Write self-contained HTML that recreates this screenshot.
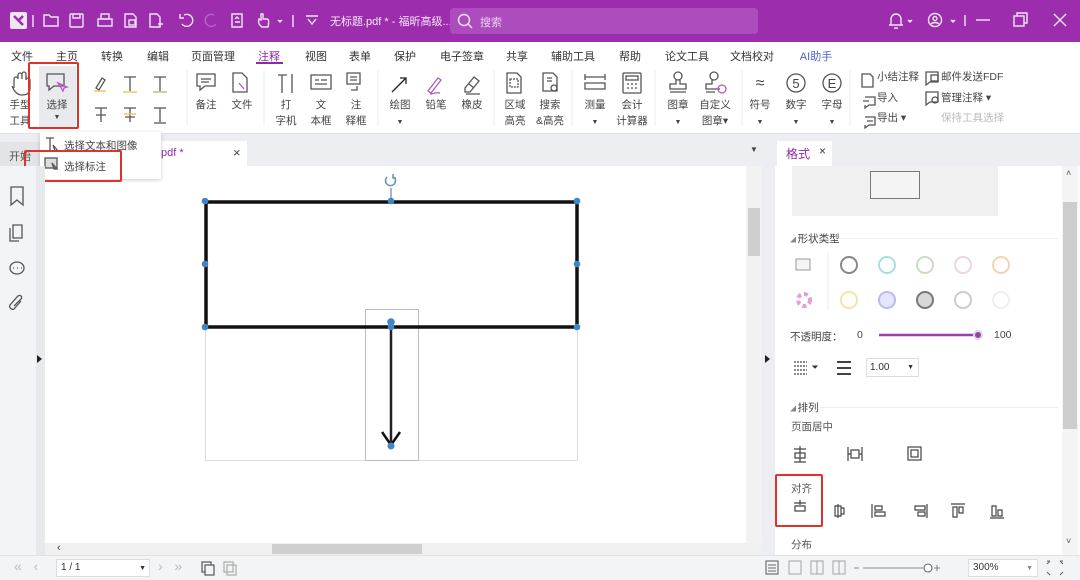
<!DOCTYPE html>
<html><head><meta charset="utf-8"><style>
*{margin:0;padding:0;box-sizing:border-box}
body{width:1080px;height:580px;overflow:hidden;position:relative;background:#fff;font-family:"Liberation Sans","Noto Sans CJK SC",sans-serif;font-size:11px;color:#333}
.a{position:absolute}
.c{position:absolute;transform:translateX(-50%);white-space:nowrap;text-align:center}
.lbl{font-size:10.5px;color:#444;line-height:16px}
svg{position:absolute;overflow:visible}
.ic{fill:none;stroke:#555;stroke-width:1.3}
.dot{fill:#3d86c9}
</style></head><body>
<!-- title bar -->
<div class="a" style="left:0;top:0;width:1080px;height:42px;background:#9c2eae"></div>
<div class="a" style="left:10px;top:12px;width:17px;height:17px;background:#f2e6f5;border-radius:2px"></div>
<svg style="left:10px;top:12px" width="17" height="17"><path d="M4 4L13 13M13 4L8 9" stroke="#9c2eae" stroke-width="2.5"/></svg>
<svg style="left:0;top:0" width="450" height="42" class="w">
<g fill="none" stroke="#f3e4f6" stroke-width="1.4">
<line x1="33" y1="15" x2="33" y2="27"/>
<path d="M44 15h5l2 2h7v9h-14z"/>
<rect x="70" y="14" width="13" height="13" rx="1"/><path d="M73 14v4h7v-4"/>
<rect x="98" y="19" width="14" height="7"/><rect x="101" y="14" width="8" height="5"/>
<path d="M125 14h8l3 3v10h-11z"/><rect x="129" y="20" width="6" height="5"/>
<path d="M150 14h7l3 3v10h-10z"/><path d="M160 22v5M158 24h5"/>
<path d="M184 15a6 6 0 1 1-2 9M180 14v4h4"/>
<path d="M214 15a6 6 0 1 0 2 9" stroke="#b866c6"/>
<path d="M232 14h10v13h-10z"/><path d="M235 19l2-2 2 2M235 22h5"/>
<path d="M262 27c-3-2-4-5-3-8l2 1v-6h2v5h4c2 0 2 4 1 8z"/><path d="M278 20l2 2 2-2" fill="#f3e4f6"/>
<line x1="293" y1="15" x2="293" y2="27"/>
<path d="M306 16h12M308 19l4 5 4-5"/>
</g>
<text x="330" y="25" fill="#f5e8f7" font-size="11">无标题.pdf * - 福昕高级...</text>
</svg>
<div class="a" style="left:450px;top:8px;width:308px;height:26px;background:#ad4cbd;border-radius:4px"></div>
<svg style="left:457px;top:13px" width="16" height="16"><circle cx="7" cy="7" r="5.5" fill="none" stroke="#f3e4f6" stroke-width="1.4"/><path d="M11 11l4 4" stroke="#f3e4f6" stroke-width="1.4"/></svg>
<div class="a" style="left:480px;top:14px;color:#e9d4ee;font-size:11px">搜索</div>
<svg style="left:880px;top:0" width="200" height="42"><g fill="none" stroke="#f3e4f6" stroke-width="1.4">
<path d="M11 25V19a5 5 0 0 1 10 0v6h2H9zM14 28h4"/><path d="M28 20l2 2 2-2" fill="#f3e4f6"/>
<circle cx="55" cy="20" r="6.5"/><circle cx="55" cy="18.5" r="2"/><path d="M51 24c2-2 6-2 8 0"/><path d="M71 20l2 2 2-2" fill="#f3e4f6"/>
<line x1="85" y1="15" x2="85" y2="26"/><line x1="96" y1="20" x2="110" y2="20"/>
<rect x="134" y="16" width="10" height="10"/><path d="M137 16v-3h10v10h-3"/>
<path d="M174 14l12 12M186 14l-12 12"/></g></svg>
<!-- menu -->
<div class="a" style="left:0;top:42px;width:1080px;height:92px;background:#fff;border-bottom:1px solid #e3e3e3"></div>
<div style="font-size:11px;color:#333">
<div class="c" style="left:22px;top:48px">文件</div><div class="c" style="left:67px;top:48px">主页</div><div class="c" style="left:112px;top:48px">转换</div><div class="c" style="left:158px;top:48px">编辑</div><div class="c" style="left:213px;top:48px">页面管理</div><div class="c" style="left:269px;top:48px;color:#8e2aa3">注释</div><div class="c" style="left:316px;top:48px">视图</div><div class="c" style="left:360px;top:48px">表单</div><div class="c" style="left:405px;top:48px">保护</div><div class="c" style="left:462px;top:48px">电子签章</div><div class="c" style="left:517px;top:48px">共享</div><div class="c" style="left:573px;top:48px">辅助工具</div><div class="c" style="left:630px;top:48px">帮助</div><div class="c" style="left:687px;top:48px">论文工具</div><div class="c" style="left:752px;top:48px">文档校对</div><div class="c" style="left:816px;top:48px;color:#4c5fc9">AI助手</div>
</div>
<div class="a" style="left:256px;top:62px;width:27px;height:2px;background:#8e2aa3"></div>
<!-- ribbon -->
<div class="a" style="left:39px;top:66px;width:37px;height:62px;background:#e9eaee"></div>
<svg style="left:0;top:66px" width="1080" height="66"><g class="ic">
<path d="M14 22v-9a2 2 0 0 1 4 0v-4a2 2 0 0 1 4 0v4M22 8a2 2 0 0 1 4 0v6a2 2 0 0 1 4 0v8c0 5-3 7-8 7s-8-4-10-9"/>
<path d="M47 8h17v12h-10l-5 4v-4h-2z"/><path d="M58 17l5 8 1-3 3-1z" stroke="#c04fd0"/>
<path d="M96 22l6-10 3 2-6 10z"/><line x1="94" y1="25" x2="106" y2="25" stroke="#e6c34a"/>
<path d="M124 11h12M130 11v14"/><line x1="123" y1="26" x2="137" y2="26" stroke="#e6c34a"/>
<path d="M154 11h12M160 11v14"/><line x1="153" y1="26" x2="167" y2="26" stroke="#9bbf6d"/>
<path d="M95 42h12M101 42v14M96 49h10"/><path d="M124 42h12M130 42v14M125 51h10"/><line x1="124" y1="48" x2="136" y2="48" stroke="#e6c34a"/>
<path d="M154 42h12M160 42v14"/><line x1="154" y1="57" x2="166" y2="57"/>
<path d="M197 8h18v12h-10l-5 4v-4h-3zM201 13h10M201 16h8"/>
<path d="M233 7h9l5 5v14h-14z"/><path d="M239 17l5 6" stroke="#c04fd0"/>
<path d="M278 9h9M282 9v18M292 8v19" /><path d="M311 9h20v14h-20zM315 14h4M321 14h6M315 18h12"/>
<path d="M347 7h13v11h-13zM350 11h7M350 14h7M357 20v4h-6"/>
<path d="M392 26l14-14M400 12h6v6" stroke="#222"/>
<path d="M428 25l10-13 3 2-10 13zM430 28c3 0 6-2 10-1" stroke="#b05ac0"/>
<path d="M465 22l9-11 5 4-9 11h-5zM469 18l5 4M466 28h14"/>
<path d="M507 7h10l4 4v16h-14z"/><rect x="510" y="13" width="8" height="8" stroke-dasharray="2 1"/>
<path d="M543 7h10l4 4v14h-14z M547 12h5M547 15h5"/><circle cx="554" cy="22" r="3"/>
<path d="M585 11h20M585 8v6M605 8v6M585 17h20v6h-20z"/>
<rect x="623" y="7" width="18" height="20" rx="1"/><rect x="626" y="10" width="12" height="4"/><path d="M627 18h2M631 18h2M635 18h2M627 22h2M631 22h2M635 22h2"/>
<circle cx="678" cy="10" r="4"/><path d="M676 14v4h-6v5h16v-5h-6v-4M670 26h16"/>
<circle cx="714" cy="10" r="4"/><path d="M712 14v4h-6v5h14M706 26h9"/><circle cx="722" cy="23" r="4" stroke="#b05ac0"/>
<circle cx="796" cy="17" r="9"/><circle cx="832" cy="17" r="9"/>
<path d="M862 8h8l3 3v10h-11z"/><path d="M865 31h10v8h-6l-4 3v-3M863 35h6"/><path d="M865 51h10v8h-6l-4 3v-3M867 55h6"/>
<path d="M926 6h12v10h-8l-4 3z"/><rect x="931" y="9" width="7" height="6"/>
<path d="M926 26h12v10h-8l-4 3z"/><circle cx="935" cy="34" r="3"/>
</g>
<g fill="#444" font-size="10.5" font-family="Liberation Sans,Noto Sans CJK SC,sans-serif">
<text x="760" y="22" text-anchor="middle" font-size="16">≈</text><text x="796" y="22" text-anchor="middle" font-size="13">5</text><text x="832" y="22" text-anchor="middle" font-size="13">E</text>
<text x="112" y="22" fill="none"></text>
</g>
<g fill="#ddd"><line x1="187" y1="4" x2="187" y2="60" stroke="#eee"/><line x1="264" y1="4" x2="264" y2="60" stroke="#eee"/><line x1="378" y1="4" x2="378" y2="60" stroke="#eee"/><line x1="494" y1="4" x2="494" y2="60" stroke="#eee"/><line x1="572" y1="4" x2="572" y2="60" stroke="#eee"/><line x1="655" y1="4" x2="655" y2="60" stroke="#eee"/><line x1="742" y1="4" x2="742" y2="60" stroke="#eee"/><line x1="850" y1="4" x2="850" y2="60" stroke="#eee"/></g>
</svg>
<div class="lbl">
<div class="c" style="left:20px;top:97px">手型<br>工具</div>
<div class="c" style="left:57px;top:97px">选择</div><div class="c" style="left:57px;top:110px;font-size:7px">▼</div>
<div class="c" style="left:206px;top:97px">备注</div><div class="c" style="left:242px;top:97px">文件</div>
<div class="c" style="left:286px;top:97px">打<br>字机</div><div class="c" style="left:321px;top:97px">文<br>本框</div><div class="c" style="left:356px;top:97px">注<br>释框</div>
<div class="c" style="left:400px;top:97px">绘图<br><span style="font-size:7px">▼</span></div><div class="c" style="left:436px;top:97px">铅笔</div><div class="c" style="left:472px;top:97px">橡皮</div>
<div class="c" style="left:515px;top:97px">区域<br>高亮</div><div class="c" style="left:550px;top:97px">搜索<br>&amp;高亮</div>
<div class="c" style="left:595px;top:97px">测量<br><span style="font-size:7px">▼</span></div><div class="c" style="left:632px;top:97px">会计<br>计算器</div>
<div class="c" style="left:678px;top:97px">图章<br><span style="font-size:7px">▼</span></div><div class="c" style="left:715px;top:97px">自定义<br>图章▾</div>
<div class="c" style="left:760px;top:97px">符号<br><span style="font-size:7px">▼</span></div><div class="c" style="left:796px;top:97px">数字<br><span style="font-size:7px">▼</span></div><div class="c" style="left:832px;top:97px">字母<br><span style="font-size:7px">▼</span></div>
<div class="a" style="left:877px;top:69px">小结注释</div><div class="a" style="left:941px;top:69px">邮件发送FDF</div>
<div class="a" style="left:877px;top:90px">导入</div><div class="a" style="left:941px;top:90px">管理注释 ▾</div>
<div class="a" style="left:877px;top:110px">导出 ▾</div><div class="a" style="left:941px;top:110px;color:#bbb">保持工具选择</div>
</div>
<div class="a" style="left:28px;top:62px;width:51px;height:67px;border:2px solid #e0312b;border-radius:2px"></div>
<!-- tab row -->
<div class="a" style="left:0;top:134px;width:1080px;height:32px;background:#eceef2"></div>
<div class="a" style="left:0;top:142px;width:45px;height:24px;background:#e2e4e8;padding:6px 0 0 9px;color:#555">开始</div>
<div class="a" style="left:150px;top:141px;width:97px;height:25px;background:#fff"></div>
<div class="a" style="left:158px;top:147px;color:#8e2aa3">.pdf *</div>
<div class="a" style="left:233px;top:145px;font-size:13px;color:#444">×</div>
<div class="a" style="left:750px;top:145px;font-size:8px;color:#444">▼</div>
<div class="a" style="left:777px;top:141px;width:55px;height:25px;background:#fff"></div>
<div class="a" style="left:786px;top:145px;color:#8e2aa3;font-size:12px">格式</div>
<div class="a" style="left:819px;top:144px;font-size:12px;color:#444">×</div>
<!-- dropdown -->
<div class="a" style="left:40px;top:132px;width:121px;height:47px;background:#fff;box-shadow:0 1px 4px rgba(0,0,0,.2)"></div>
<svg style="left:44px;top:136px" width="20" height="40"><g class="ic"><path d="M2 2h8M6 2v12"/><path d="M9 9l5 6-3 0z"/><rect x="1" y="22" width="12" height="10" fill="#ddd"/><path d="M8 27l5 6-3 0z"/></g></svg>
<div class="a" style="left:64px;top:138px;color:#444;font-size:10.5px">选择文本和图像</div>
<div class="a" style="left:64px;top:159px;color:#444;font-size:10.5px">选择标注</div>
<div class="a" style="left:24px;top:150px;width:98px;height:32px;border:2px solid #e0312b;border-radius:2px"></div>
<!-- left sidebar -->
<div class="a" style="left:0;top:166px;width:36px;height:389px;background:#f3f4f7"></div>
<div class="a" style="left:36px;top:166px;width:9px;height:389px;background:#e8e9ed"></div>
<svg style="left:0;top:166px" width="45" height="300"><g class="ic" stroke-width="1.4">
<path d="M11 21v18l6-5 6 5V21z"/><path d="M13 59h9v13h-9zM10 62v13h9"/>
<ellipse cx="17" cy="102" rx="7" ry="6"/><path d="M13 102h1M17 102h1M21 102h1"/>
<path d="M21 135l-7 8a3 3 0 0 1-4-4l8-9a2 2 0 0 1 3 3l-7 7"/></g>
<path d="M37 189l5 4-5 4z" fill="#222"/></svg>
<!-- document -->
<svg style="left:0;top:0" width="750" height="545">
<rect x="205.5" y="327.5" width="372" height="133" fill="none" stroke="#bbb" stroke-width="1" stroke-dasharray="1 1"/>
<rect x="365.5" y="309.5" width="53" height="151" fill="none" stroke="#bbb" stroke-width="1"/>
<rect x="206" y="202" width="371" height="125" fill="none" stroke="#111" stroke-width="3.5"/>
<line x1="391" y1="323" x2="391" y2="444" stroke="#222" stroke-width="2.5"/>
<path d="M382 432l9 13 9-13" fill="none" stroke="#111" stroke-width="2.5"/>
<line x1="391" y1="188" x2="391" y2="201" stroke="#6b8fb5" stroke-width="1.3"/>
<path d="M387 177a5 5 0 1 0 7 0M393 174v4h3" fill="none" stroke="#6b8fb5" stroke-width="1.5"/>
<g class="dot"><circle cx="205" cy="201" r="3.3"/><circle cx="391" cy="201" r="3.3"/><circle cx="577" cy="201" r="3.3"/><circle cx="205" cy="264" r="3.3"/><circle cx="577" cy="264" r="3.3"/><circle cx="205" cy="327" r="3.3"/><circle cx="577" cy="327" r="3.3"/><circle cx="391" cy="322" r="3.8"/><circle cx="391" cy="327" r="3.3"/><circle cx="391" cy="446" r="3.5"/></g>
</svg>
<!-- scrollbars -->
<div class="a" style="left:746px;top:166px;width:16px;height:377px;background:#f2f2f2"></div>
<div class="a" style="left:748px;top:208px;width:12px;height:48px;background:#cfcfcf"></div>
<div class="a" style="left:45px;top:543px;width:717px;height:12px;background:#f0f0f0"></div>
<div class="a" style="left:272px;top:544px;width:150px;height:10px;background:#cfcfcf"></div>
<div class="a" style="left:57px;top:542px;font-size:11px;color:#444">‹</div>
<div class="a" style="left:762px;top:166px;width:13px;height:389px;background:#eceef2"></div>
<svg style="left:762px;top:353px" width="12" height="12"><path d="M3 2l5 4-5 4z" fill="#222"/></svg>
<!-- right panel -->
<div class="a" style="left:775px;top:166px;width:287px;height:389px;background:#fff"></div>
<div class="a" style="left:792px;top:166px;width:206px;height:50px;background:#f0f0f0"></div>
<div class="a" style="left:870px;top:171px;width:50px;height:28px;border:1px solid #777;background:#f4f4f4"></div>
<div class="a" style="left:1062px;top:166px;width:16px;height:389px;background:#f4f4f4"></div>
<div class="a" style="left:1063px;top:202px;width:14px;height:227px;background:#cdcdcd"></div>
<div class="a" style="left:1066px;top:168px;font-size:9px;color:#555">˄</div>
<div class="a" style="left:1066px;top:536px;font-size:9px;color:#555">˅</div>
<div class="a" style="left:790px;top:231px;font-size:10.5px;color:#444"><span style="font-size:6px;color:#888">◢ </span>形状类型</div>
<div class="a" style="left:790px;top:400px;font-size:10.5px;color:#444"><span style="font-size:6px;color:#888">◢ </span>排列</div>
<div class="a" style="left:838px;top:238px;width:220px;height:1px;background:#eee"></div>
<div class="a" style="left:820px;top:407px;width:238px;height:1px;background:#eee"></div>
<svg style="left:775px;top:240px" width="290" height="300">
<rect x="21" y="19" width="14" height="11" fill="#f4f4f4" stroke="#999"/>
<line x1="53" y1="12" x2="53" y2="70" stroke="#eee"/>
<g fill="none" stroke-width="2"><circle cx="74" cy="25" r="8" stroke="#888"/><circle cx="112" cy="25" r="8" stroke="#a8dde6"/><circle cx="150" cy="25" r="8" stroke="#c8dec2"/><circle cx="188" cy="25" r="8" stroke="#ead6e6"/><circle cx="226" cy="25" r="8" stroke="#f0d4b0"/>
<circle cx="74" cy="60" r="8" stroke="#f0e6a6"/><circle cx="112" cy="60" r="8" stroke="#b9b9ef" fill="#e6e6fb"/><circle cx="150" cy="60" r="8" stroke="#777" fill="#d8d8d8"/><circle cx="188" cy="60" r="8" stroke="#ccc"/><circle cx="226" cy="60" r="8" stroke="#eee"/></g>
<circle cx="29" cy="60" r="6" fill="none" stroke="#e8a0d0" stroke-width="4" stroke-dasharray="4 3"/>
<line x1="104" y1="95" x2="203" y2="95" stroke="#9c3fae" stroke-width="2.5"/><circle cx="203" cy="95" r="4" fill="#9c3fae" stroke="#ddd" stroke-width="2"/>
<g stroke="#444" stroke-width="1.2"><path d="M19 122h13M19 126h13M19 130h13M19 134h13" stroke-dasharray="2 1"/><path d="M62 122h14M62 128h14M62 134h14" stroke-width="2"/></g>
<path d="M38 126l2 2 2-2z" fill="#333" stroke="#333"/>
<g fill="none" stroke="#444" stroke-width="1.2">
<path d="M19 209h12M25 206v16M20 213h10v5h-10zM19 222h12"/>
<path d="M73 207v14M87 207v14M76 210h8v8h-8zM73 214h3M84 214h3"/>
<rect x="133" y="207" width="13" height="13"/><rect x="136" y="210" width="7" height="7"/>
<path d="M19 263h12M25 265v-5M20 266h10v5h-10z"/>
<path d="M63 264v14M60 266h6v10h-6zM66 268h3v6h-3z"/>
<path d="M97 264v14M100 266h7v4h-7zM100 272h10v4h-10z"/>
<path d="M152 264v14M140 266h10v4h-10zM143 272h7v4h-7z"/>
<path d="M176 264h14M178 267h4v10h-4zM184 267h4v6h-4z"/>
<path d="M215 278h14M217 266h4v10h-4zM223 270h4v6h-4z"/>
</g>
</svg>
<div class="a" style="left:790px;top:329px;font-size:10.5px;color:#444">不透明度：</div>
<div class="a" style="left:857px;top:329px;font-size:10.5px;color:#444">0</div>
<div class="a" style="left:994px;top:329px;font-size:10.5px;color:#444">100</div>
<div class="a" style="left:866px;top:358px;width:53px;height:19px;border:1px solid #ddd;font-size:10px;padding:3px 0 0 3px;color:#333">1.00<span style="position:absolute;right:4px;font-size:7px;top:5px">▼</span></div>
<div class="a" style="left:791px;top:419px;font-size:10.5px;color:#555">页面居中</div>
<div class="a" style="left:791px;top:481px;font-size:10.5px;color:#555">对齐</div>
<div class="a" style="left:791px;top:537px;font-size:10.5px;color:#555">分布</div>
<div class="a" style="left:775px;top:474px;width:48px;height:53px;border:2px solid #e0312b;border-radius:2px"></div>
<!-- status bar -->
<div class="a" style="left:0;top:555px;width:1080px;height:25px;background:#f3f4f6;border-top:1px solid #e2e2e2"></div>
<div class="a" style="left:14px;top:558px;font-size:14px;color:#bbb">«&nbsp;&nbsp;&nbsp;‹</div>
<div class="a" style="left:56px;top:559px;width:94px;height:18px;background:#fff;border:1px solid #ddd;font-size:10px;padding:2px 0 0 4px">1 / 1<span style="position:absolute;right:3px;font-size:7px;top:5px">▼</span></div>
<div class="a" style="left:158px;top:558px;font-size:14px;color:#bbb">›&nbsp;&nbsp;&nbsp;»</div>
<svg style="left:200px;top:558px" width="40" height="20"><g fill="none" stroke="#555" stroke-width="1.2"><rect x="2" y="4" width="9" height="10"/><rect x="5" y="7" width="9" height="10" fill="#f3f4f6"/><rect x="24" y="4" width="9" height="10" stroke="#aaa"/><rect x="27" y="7" width="9" height="10" stroke="#aaa"/></g></svg>
<svg style="left:760px;top:558px" width="320" height="20"><g fill="none" stroke="#666" stroke-width="1.1"><rect x="6" y="3" width="12" height="13"/><path d="M8 7h8M8 10h8M8 13h8"/><rect x="29" y="3" width="12" height="13" stroke="#aaa"/><rect x="51" y="3" width="12" height="13" stroke="#aaa"/><path d="M57 3v13" stroke="#aaa"/><rect x="73" y="3" width="12" height="13" stroke="#aaa"/><path d="M79 3v13" stroke="#aaa"/>
<path d="M94 10h5M103 10h60M174 10h6M177 7v6" stroke="#888"/><circle cx="168" cy="10" r="4" fill="#fff"/>
<path d="M290 3l-3 3M290 3h-3M300 3l3 3M300 3h3M290 17l-3-3M300 17l3-3"/></g></svg>
<div class="a" style="left:968px;top:559px;width:70px;height:18px;background:#fff;border:1px solid #ddd;font-size:10px;padding:2px 0 0 4px">300%<span style="position:absolute;right:4px;font-size:7px;top:5px;color:#888">▼</span></div>
</body></html>
